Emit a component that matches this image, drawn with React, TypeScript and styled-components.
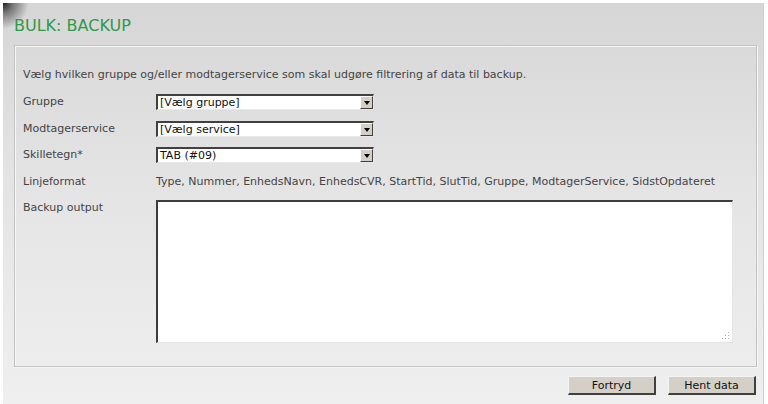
import styled, { createGlobalStyle } from 'styled-components'

const GlobalStyle = createGlobalStyle`
    html, body {
        margin: 0;
        padding: 0;
        background: #ffffff;
    }

    body {
        font-family: "DejaVu Sans", Verdana, sans-serif;
        color: #444444;
    }
`

const Panel = styled.div`
    box-sizing: border-box;
    margin: 3px 4px 0 3px;
    height: 401px;
    padding: 14px 6px 0 11px;
    border-right: 1px solid #cfcfcf;
    background:
        radial-gradient(circle at 0 0, rgba(20, 20, 20, 0.95) 0, rgba(40, 40, 40, 0.55) 10px, rgba(60, 60, 60, 0) 26px),
        linear-gradient(180deg, #d6d6d6 0%, #e4e4e4 45%, #efefef 100%);
`

const Title = styled.h1`
    margin: 0;
    font-size: 16px;
    line-height: 18px;
    font-weight: normal;
    color: #2f9a48;
`

const Fieldset = styled.div`
    box-sizing: border-box;
    margin-top: 10px;
    height: 322px;
    padding: 22px 8px 0 8px;
    border: 1px solid #c3c3c3;
    box-shadow: inset 1px 1px 0 #f6f6f6, 1px 1px 0 #f6f6f6;
`

const Intro = styled.p`
    margin: 0 0 12px 0;
    font-size: 11px;
    line-height: 14px;
`

const Row = styled.div<{ $top?: boolean; $gap: number }>`
    display: grid;
    grid-template-columns: 133px 1fr;
    align-items: ${p => (p.$top ? 'start' : 'center')};
    margin-top: ${p => p.$gap}px;
    min-height: 16px;
`

const Label = styled.span`
    font-size: 11px;
    line-height: 16px;
`

const Value = styled.span`
    font-size: 11px;
    line-height: 16px;
    white-space: nowrap;
`

const SelectBox = styled.div`
    box-sizing: border-box;
    width: 218px;
    height: 16px;
    display: flex;
    align-items: stretch;
    background: #ffffff;
    border-top: 2px solid #404040;
    border-left: 2px solid #404040;
    border-right: 1px solid #e8e8e8;
    border-bottom: 1px solid #e8e8e8;
`

const SelectText = styled.span`
    flex: 1;
    padding-left: 2px;
    font-size: 11px;
    line-height: 13px;
    color: #111111;
`

const ArrowButton = styled.span`
    box-sizing: border-box;
    width: 13px;
    display: flex;
    align-items: center;
    justify-content: center;
    background: #d4d0c8;
    border-top: 1px solid #ffffff;
    border-left: 1px solid #ffffff;
    border-right: 1px solid #404040;
    border-bottom: 1px solid #404040;

    &::after {
        content: '';
        border-left: 3px solid transparent;
        border-right: 3px solid transparent;
        border-top: 4px solid #000000;
        margin-top: 1px;
    }
`

const Output = styled.textarea`
    box-sizing: border-box;
    display: block;
    width: 577px;
    height: 143px;
    margin: 0;
    padding: 2px;
    resize: none;
    background-color: #ffffff;
    background-image: url("data:image/svg+xml,%3Csvg xmlns='http://www.w3.org/2000/svg' width='8' height='8'%3E%3Cg fill='%23b0b0b0'%3E%3Crect x='6' y='0' width='1' height='1'/%3E%3Crect x='3' y='3' width='1' height='1'/%3E%3Crect x='6' y='3' width='1' height='1'/%3E%3Crect x='0' y='6' width='1' height='1'/%3E%3Crect x='3' y='6' width='1' height='1'/%3E%3Crect x='6' y='6' width='1' height='1'/%3E%3C/g%3E%3C/svg%3E");
    background-repeat: no-repeat;
    background-position: right 2px bottom 2px;
    border-top: 2px solid #3c3c3c;
    border-left: 2px solid #3c3c3c;
    border-right: 1px solid #e6e6e6;
    border-bottom: 1px solid #e6e6e6;
    outline: none;
`

const Actions = styled.div`
    display: flex;
    justify-content: flex-end;
    gap: 12px;
    margin-top: 9px;
    padding-right: 1px;
`

const Button = styled.button`
    box-sizing: border-box;
    width: 88px;
    height: 19px;
    padding: 0;
    font-family: "DejaVu Sans", Verdana, sans-serif;
    font-size: 11px;
    color: #111111;
    background: #d4d0c8;
    border-top: 1px solid #f4f4f4;
    border-left: 1px solid #f4f4f4;
    border-right: 2px solid #404040;
    border-bottom: 2px solid #404040;
    cursor: pointer;
`

const Select = (props: { text: string }) => (
    <SelectBox>
        <SelectText>{props.text}</SelectText>
        <ArrowButton />
    </SelectBox>
)

export default function App() {
    return (
        <>
            <GlobalStyle />
            <Panel>
                <Title>BULK: BACKUP</Title>
                <Fieldset>
                    <Intro>Vælg hvilken gruppe og/eller modtagerservice som skal udgøre filtrering af data til backup.</Intro>
                    <Row $gap={0}>
                        <Label>Gruppe</Label>
                        <Select text='[Vælg gruppe]' />
                    </Row>
                    <Row $gap={11}>
                        <Label>Modtagerservice</Label>
                        <Select text='[Vælg service]' />
                    </Row>
                    <Row $gap={10}>
                        <Label>Skilletegn*</Label>
                        <Select text='TAB (#09)' />
                    </Row>
                    <Row $gap={11}>
                        <Label>Linjeformat</Label>
                        <Value>Type, Nummer, EnhedsNavn, EnhedsCVR, StartTid, SlutTid, Gruppe, ModtagerService, SidstOpdateret</Value>
                    </Row>
                    <Row $gap={10} $top>
                        <Label>Backup output</Label>
                        <Output />
                    </Row>
                </Fieldset>
                <Actions>
                    <Button>Fortryd</Button>
                    <Button>Hent data</Button>
                </Actions>
            </Panel>
        </>
    )
}
